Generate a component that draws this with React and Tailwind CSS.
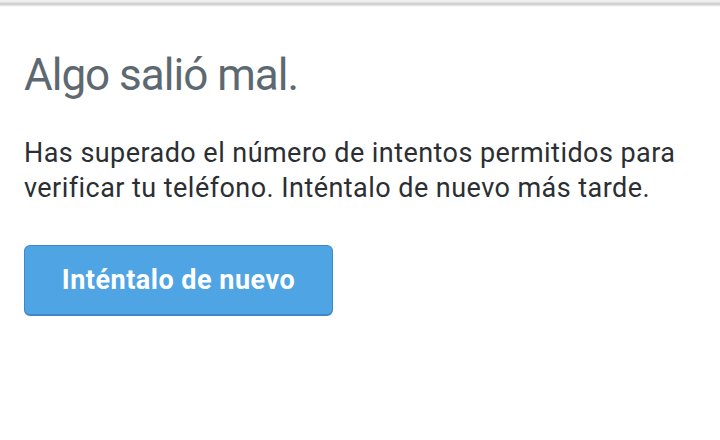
export default function App() {
  return (
    <div className="w-[720px] h-[440px] bg-white relative overflow-hidden" style={{ fontFamily: 'Roboto, "Noto Sans", sans-serif' }}>
      <div className="h-[7px] bg-[linear-gradient(to_bottom,#f3f3f3_0px,#e8e8e8_2px,#c9c9c9_4px,#dcdcdc_5px,#ffffff_7px)]" />
      <div className="pl-[24px] pr-[16px]">
        <h1 className="mt-[42px] text-[44px] leading-[52px] tracking-[-1px] text-[#5d6970] font-normal">Algo salió mal.</h1>
        <p className="mt-[35px] text-[27px] leading-[35px] tracking-[0.45px] text-[#2b2f33]">
          Has superado el número de intentos permitidos para verificar tu teléfono. Inténtalo de nuevo más tarde.
        </p>
        <button className="mt-[39px] w-[309px] h-[71px] rounded-[6px] bg-[#4fa4e4] border border-b-2 border-[#3f88c8] text-white text-[27px] tracking-[0.5px] font-bold">
          Inténtalo de nuevo
        </button>
      </div>
    </div>
  );
}
